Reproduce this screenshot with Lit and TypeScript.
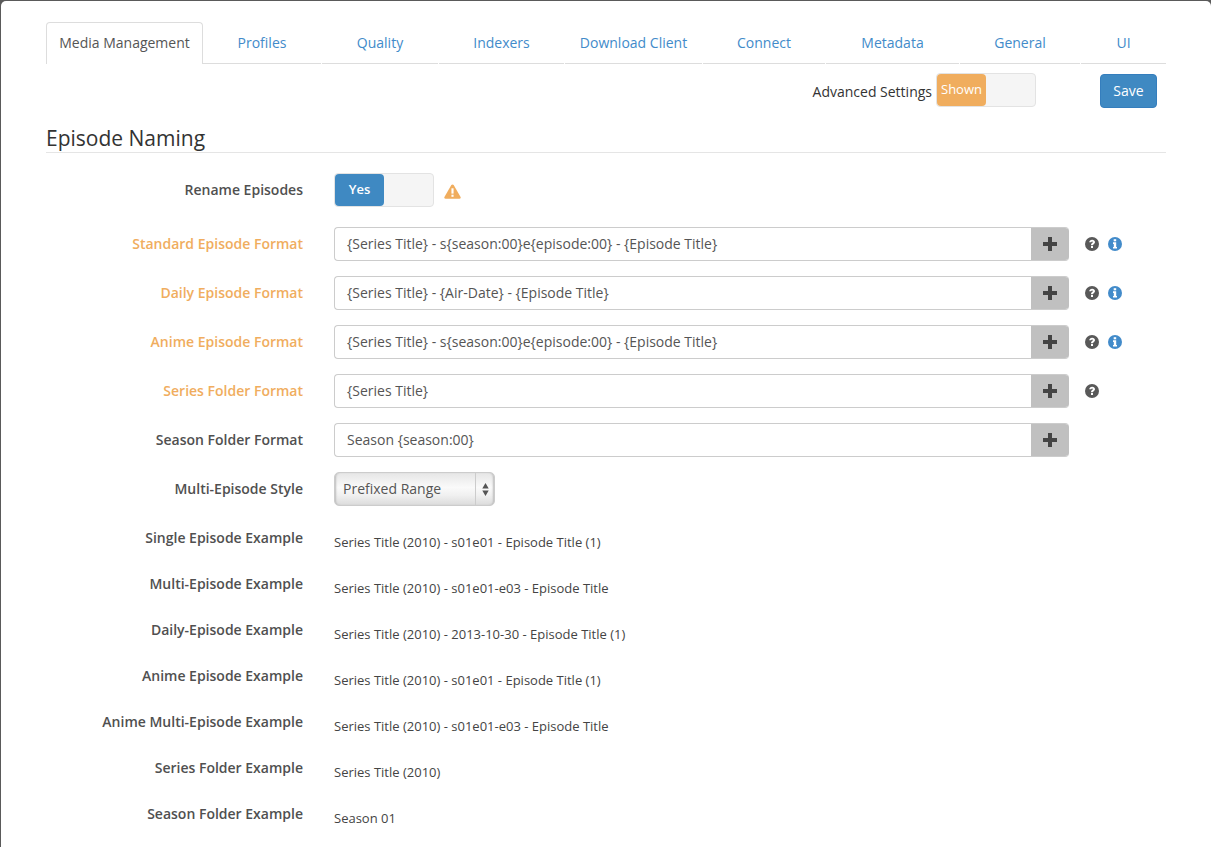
import { LitElement, html, css, svg } from "lit";
import { customElement } from "lit/decorators.js";

const tabs: string[] = [
  "Media Management", "Profiles", "Quality", "Indexers",
  "Download Client", "Connect", "Metadata", "General", "UI",
];
const formats: [string, string, boolean, boolean, boolean][] = [
  ["Standard Episode Format", "{Series Title} - s{season:00}e{episode:00} - {Episode Title}", true, true, true],
  ["Daily Episode Format", "{Series Title} - {Air-Date} - {Episode Title}", true, true, true],
  ["Anime Episode Format", "{Series Title} - s{season:00}e{episode:00} - {Episode Title}", true, true, true],
  ["Series Folder Format", "{Series Title}", true, true, false],
  ["Season Folder Format", "Season {season:00}", false, false, false],
];
const examples: [string, string][] = [
  ["Single Episode Example", "Series Title (2010) - s01e01 - Episode Title (1)"],
  ["Multi-Episode Example", "Series Title (2010) - s01e01-e03 - Episode Title"],
  ["Daily-Episode Example", "Series Title (2010) - 2013-10-30 - Episode Title (1)"],
  ["Anime Episode Example", "Series Title (2010) - s01e01 - Episode Title (1)"],
  ["Anime Multi-Episode Example", "Series Title (2010) - s01e01-e03 - Episode Title"],
  ["Series Folder Example", "Series Title (2010)"],
  ["Season Folder Example", "Season 01"],
];

const question = svg`<svg class="ico" viewBox="0 0 14 14"><circle cx="7" cy="7" r="7" fill="#595959"/><path d="M4.200 5.300C4.400 3.700 5.500 2.700 7.100 2.700c1.700 0 2.900 1 2.900 2.400 0 1.100-.6 1.700-1.300 2.100-.5.300-.7.500-.7 1H6c0-1.200.3-1.800 1.100-2.300.5-.3.800-.5.800-.8 0-.4-.3-.6-.8-.6-.5 0-.8.300-.9.800z" fill="#fff"/><rect x="6" y="9" width="2" height="2" fill="#fff"/></svg>`;
const info = svg`<svg class="ico" viewBox="0 0 14 14"><circle cx="7" cy="7" r="7" fill="#428bca"/><rect x="5.700" y="2.200" width="2.500" height="2.100" fill="#fff"/><path d="M5 5.300h3.200v4.700H9v1.600H5V10h.8V6.900H5z" fill="#fff"/></svg>`;
const warn = svg`<svg class="warn" viewBox="0 0 16 14"><path d="M8 .3c.5 0 .9.3 1.100.6l6.500 11.300c.4.8-.1 1.600-1 1.600H1.400c-.9 0-1.400-.8-1-1.600L6.900.9C7.100.6 7.500.3 8 .3z" fill="#f0ad5e"/><rect x="7" y="4" width="2" height="5" fill="#fff"/><rect x="7" y="10" width="2" height="2" fill="#fff"/></svg>`;

@customElement("app-root")
export class AppRoot extends LitElement {
  static styles = css`
    :host { display: block; height: 847px; overflow: hidden; background: #5a5a5a; padding: 1px 0 0 1px; box-sizing: border-box; font-family: "Open Sans", sans-serif; font-size: 14px; color: #555; }
    .page { background: #fff; height: 846px; border-radius: 5px 5px 0 0; padding: 21px 45px 0 45px; box-sizing: border-box; }
    .tabs { display: grid; grid-template-columns: 157px 119px 117px 126px 138px 123px 134px 121px 85px; height: 42px; }
    .tab { display: flex; align-items: center; justify-content: center; color: #428bca; border-bottom: 1px solid #ddd; box-sizing: border-box; height: 42px; margin-right: 1px; }
    .tab:last-child { margin-right: 0; }
    .tab.active { color: #555; border: 1px solid #ddd; border-bottom: 0; border-radius: 4px 4px 0 0; margin-right: 0; padding-bottom: 2px; }
    .actions { display: flex; justify-content: flex-end; align-items: center; height: 34px; margin-top: 9px; padding-right: 9px; }
    .adv { color: #333; margin-right: 4px; position: relative; top: 1px; }
    .toggle { display: flex; width: 100px; height: 34px; box-sizing: border-box; border: 1px solid #e3e3e3; border-radius: 4px; background: #f5f5f5; }
    .knob { width: 49px; border-radius: 4px; color: #fff; display: flex; justify-content: center; box-sizing: border-box; }
    .knob.orange { background: #f0ad5e; font-size: 13px; line-height: 30px; }
    .knob.blue { background: #3f89c2; line-height: 31px; font-size: 13px; font-weight: 600; }
    .save { width: 57px; height: 34px; margin-left: 64px; margin-top: 1px; background: #3f89c2; border: 1px solid #357ebd; border-radius: 4px; color: #fff; display: flex; align-items: center; justify-content: center; box-sizing: border-box; }
    h2 { margin: -1px 0 0; font-size: 21px; font-weight: 400; color: #333; line-height: 28px; height: 47px; padding-top: 18px; border-bottom: 1px solid #e5e5e5; box-sizing: border-box; }
    .form { margin-top: 20px; }
    .row { display: grid; grid-template-columns: 257px 31px 1fr; height: 34px; margin-bottom: 15px; align-items: center; }
    .row.first { margin-bottom: 20px; }
    .lbl { text-align: right; font-weight: 600; color: #505050; grid-column: 1; }
    .row .lbl { padding-bottom: 2px; }
    .lbl.warnc { color: #f0ad5e; }
    .cell { grid-column: 3; display: flex; align-items: center; }
    .input { display: flex; flex: none; width: 735px; height: 34px; box-sizing: border-box; border: 1px solid #ccc; border-right: 0; border-radius: 4px; overflow: hidden; }
    .val { flex: 1; padding-left: 12px; line-height: 32px; color: #555; }
    .plus { width: 38px; background: #c0c0c0; display: flex; align-items: center; justify-content: center; }
    .plus svg { width: 14px; height: 14px; }
    .ico { width: 14px; height: 14px; flex: none; }
    .help { display: flex; gap: 9px; margin-left: 16px; }
    .warn { width: 17px; height: 15px; margin-left: 10px; margin-top: 3px; }
    .select { width: 161px; height: 34px; box-sizing: border-box; border: 1px solid #ccc; border-radius: 5px; display: flex; background: linear-gradient(#e6e6e6, #fafafa 45%, #f0f0f0 70%, #dcdcdc); box-shadow: inset 2px 0 2px -1px #bbb, inset -2px 0 2px -1px #bbb; padding-left: 8px; line-height: 31px; color: #555; }
    .select .t { flex: 1; }
    .select .arrows { width: 18px; border-left: 1px solid #ccc; display: flex; align-items: center; justify-content: center; }
    .select svg { width: 9px; height: 15px; }
    .examples { margin-top: 22px; }
    .ex { display: grid; grid-template-columns: 257px 31px 1fr; height: 46px; }
    .ex .lbl { line-height: 20px; }
    .ex .v { grid-column: 3; font-size: 13px; line-height: 20px; color: #444; padding-top: 4px; }
  `;

  render() {
    return html`<div class="page">
      <nav class="tabs">
        ${tabs.map((t, i) => html`<div class="tab ${i === 0 ? "active" : ""}">${t}</div>`)}
      </nav>
      <div class="actions">
        <span class="adv">Advanced Settings</span>
        <div class="toggle"><div class="knob orange">Shown</div></div>
        <div class="save">Save</div>
      </div>
      <h2>Episode Naming</h2>
      <div class="form">
        <div class="row first">
          <div class="lbl">Rename Episodes</div>
          <div class="cell">
            <div class="toggle"><div class="knob blue">Yes</div></div>
            ${warn}
          </div>
        </div>
        ${formats.map(([l, v, adv, q, i]) => html`<div class="row">
          <div class="lbl ${adv ? "warnc" : ""}">${l}</div>
          <div class="cell">
            <div class="input">
              <div class="val">${v}</div>
              <div class="plus"><svg viewBox="1 1 12 12"><path d="M5.300 1h3.400v4.300H13v3.400H8.700V13H5.300V8.700H1V5.300h4.300z" fill="#444"/></svg></div>
            </div>
            ${q ? html`<div class="help">${question}${i ? info : ""}</div>` : ""}
          </div>
        </div>`)}
        <div class="row">
          <div class="lbl">Multi-Episode Style</div>
          <div class="cell">
            <div class="select">
              <span class="t">Prefixed Range</span>
              <span class="arrows"><svg viewBox="0 0 8 14"><path d="M4 1l3 5H1zM4 13L1 8h6z" fill="#555"/></svg></span>
            </div>
          </div>
        </div>
        <div class="examples">
          ${examples.map(([l, v]) => html`<div class="ex"><div class="lbl">${l}</div><div class="v">${v}</div></div>`)}
        </div>
      </div>
    </div>`;
  }
}
